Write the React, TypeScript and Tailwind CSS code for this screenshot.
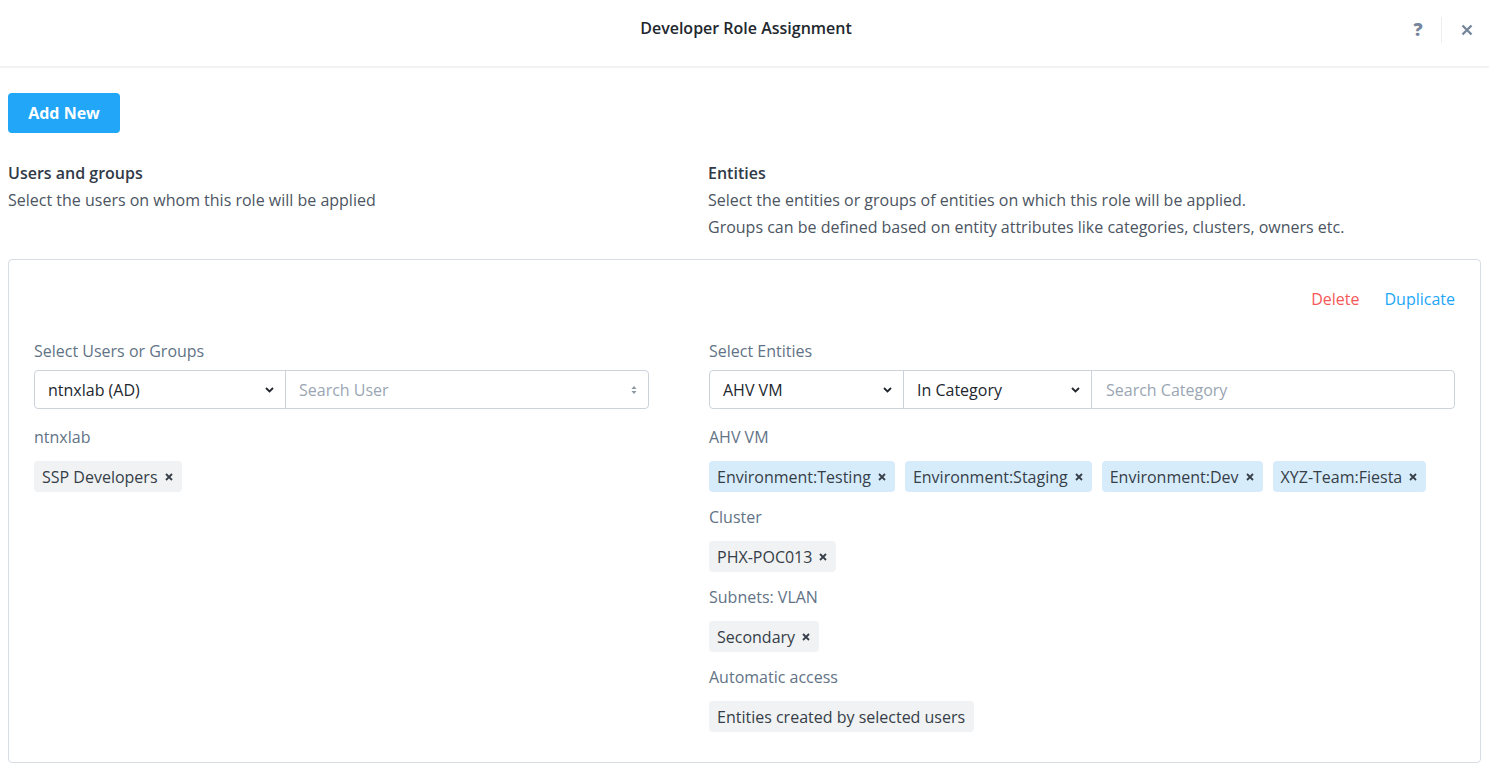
import { useState } from "react"

const font = { fontFamily: "'Open Sans', Lato, sans-serif" }

const Chevron = () => (
  <svg width="9" height="6" viewBox="0 0 9 6" className="shrink-0">
    <path d="M1 1l3.5 3.5L8 1" fill="none" stroke="#22272e" strokeWidth="1.8" />
  </svg>
)

const SortArrows = () => (
  <svg width="6" height="10" viewBox="0 0 6 10" className="shrink-0">
    <path d="M3 1L5.5 4h-5z" fill="#8a96a3" />
    <path d="M3 9L5.5 6h-5z" fill="#8a96a3" />
  </svg>
)

const Tag = ({ label, blue, closable = true }: { label: string; blue?: boolean; closable?: boolean }) => (
  <div
    className={
      "h-[31px] flex items-center gap-[7px] pl-[8px] pr-[9px] rounded-[4px] text-[16px] text-[#363e48] " +
      (blue ? "bg-[#d7ecfb]" : "bg-[#f0f2f4]")
    }
  >
    <span>{label}</span>
    {closable && (
      <svg width="8" height="8" viewBox="0 0 8 8">
        <path d="M1 1l6 6M7 1L1 7" stroke="#363e48" strokeWidth="1.8" />
      </svg>
    )}
  </div>
)

const Group = ({ title, children }: { title: string; children: React.ReactNode }) => (
  <div className="flex flex-col">
    <div className="h-[24px] flex items-center text-[16px] text-[#627386]">{title}</div>
    <div className="flex gap-[10px] mt-[12px]">{children}</div>
  </div>
)

export default function App() {
  const [user] = useState("ntnxlab (AD)")
  return (
    <div style={font} className="w-[1489px] h-[773px] bg-white text-[#363e48] overflow-hidden">
      {/* header */}
      <div className="h-[68px] border-b-[2px] border-[#f2f3f5] flex items-center relative">
        <div className="flex-1 text-center text-[16px] font-semibold text-[#22272e] pl-[3px] pb-[11px]">
          Developer Role Assignment
        </div>
        <div className="absolute right-[0px] top-[16px] flex items-center">
          <span className="text-[18px] font-extrabold text-[#75869a] w-[22px] text-center">?</span>
          <div className="w-px h-[26px] bg-[#eceef1] ml-[12px] mr-[19px]" />
          <svg width="12" height="12" viewBox="0 0 12 12" className="mr-[16px]">
            <path d="M1.5 1.5l9 9M10.5 1.5l-9 9" stroke="#75869a" strokeWidth="2.4" />
          </svg>
        </div>
      </div>

      <div className="px-[8px]">
        <button className="mt-[25px] h-[40px] w-[112px] rounded-[4px] bg-[#22a6f8] text-white text-[16px] font-bold">
          Add New
        </button>

        <div className="flex mt-[27px] text-[16px] leading-[27px]">
          <div className="w-[700px]">
            <div className="font-semibold text-[#313a48]">Users and groups</div>
            <div className="text-[#4c5562]">Select the users on whom this role will be applied</div>
          </div>
          <div>
            <div className="font-semibold text-[#313a48]">Entities</div>
            <div className="text-[#4c5562]">Select the entities or groups of entities on which this role will be applied.</div>
            <div className="text-[#4c5562]">Groups can be defined based on entity attributes like categories, clusters, owners etc.</div>
          </div>
        </div>

        {/* card */}
        <div className="mt-[18px] h-[504px] border border-[#d8dde3] rounded-[4px] px-[25px]">
          <div className="flex justify-end gap-[25px] pt-[27px] text-[16px]">
            <span className="text-[#f55858]">Delete</span>
            <span className="text-[#22a6f8]">Duplicate</span>
          </div>

          <div className="flex mt-[28px] text-[16px]">
            {/* left */}
            <div className="w-[675px] shrink-0 flex flex-col">
              <div className="text-[#627386] h-[24px] flex items-center">Select Users or Groups</div>
              <div className="mt-[7px] w-[615px] h-[39px] border border-[#ccd3db] rounded-[4px] flex">
                <div className="w-[251px] flex items-center justify-between pl-[13px] pr-[11px] border-r border-[#ccd3db] text-[#22272e]">
                  <span>{user}</span>
                  <Chevron />
                </div>
                <div className="flex-1 flex items-center justify-between pl-[13px] pr-[11px] text-[#9aa6b3]">
                  <span>Search User</span>
                  <SortArrows />
                </div>
              </div>
              <div className="mt-[16px]">
                <Group title="ntnxlab">
                  <Tag label="SSP Developers" />
                </Group>
              </div>
            </div>

            {/* right */}
            <div className="flex-1 flex flex-col">
              <div className="text-[#627386] h-[24px] flex items-center">Select Entities</div>
              <div className="mt-[7px] h-[39px] border border-[#ccd3db] rounded-[4px] flex">
                <div className="w-[194px] flex items-center justify-between pl-[13px] pr-[11px] border-r border-[#ccd3db] text-[#22272e]">
                  <span>AHV VM</span>
                  <Chevron />
                </div>
                <div className="w-[188px] flex items-center justify-between pl-[13px] pr-[11px] border-r border-[#ccd3db] text-[#22272e]">
                  <span>In Category</span>
                  <Chevron />
                </div>
                <div className="flex-1 flex items-center pl-[14px] text-[#9aa6b3]">
                  <span>Search Category</span>
                </div>
              </div>
              <div className="mt-[16px] flex flex-col gap-[13px]">
                <Group title="AHV VM">
                  <Tag blue label="Environment:Testing" />
                  <Tag blue label="Environment:Staging" />
                  <Tag blue label="Environment:Dev" />
                  <Tag blue label="XYZ-Team:Fiesta" />
                </Group>
                <Group title="Cluster">
                  <Tag label="PHX-POC013" />
                </Group>
                <Group title="Subnets: VLAN">
                  <Tag label="Secondary" />
                </Group>
                <Group title="Automatic access">
                  <Tag label="Entities created by selected users" closable={false} />
                </Group>
              </div>
            </div>
          </div>
        </div>
      </div>
    </div>
  )
}
